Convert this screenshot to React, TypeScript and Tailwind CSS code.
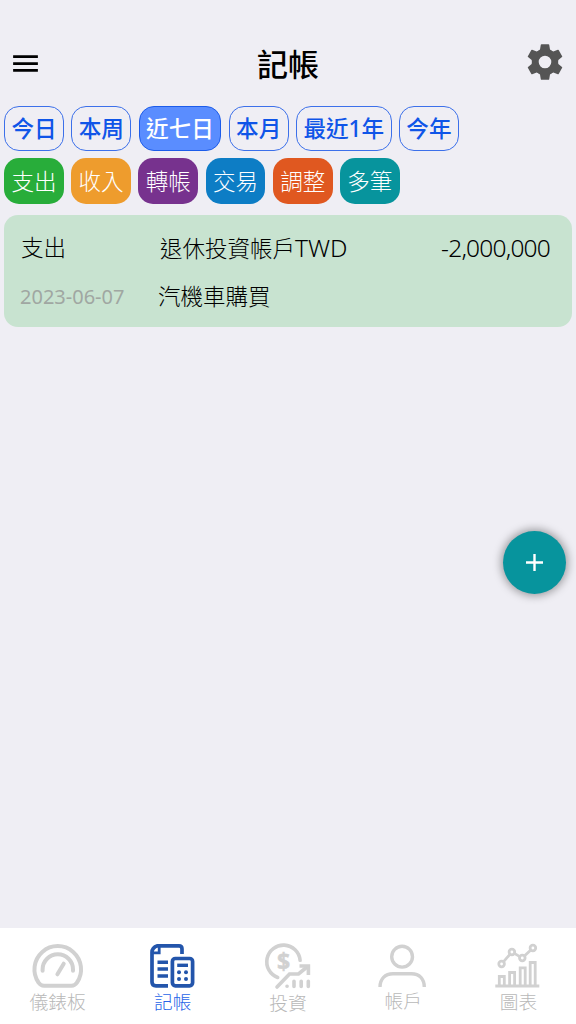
import type { ReactNode } from 'react';
import { MdMenu } from 'react-icons/md';

const RANGES = ['今日', '本周', '近七日', '本月', '最近1年', '今年'];
const ACTIVE_RANGE = '近七日';

const ACTIONS = [
  { label: '支出', color: 'bg-[#28ad3a]' },
  { label: '收入', color: 'bg-[#ee9c2d]' },
  { label: '轉帳', color: 'bg-[#77328e]' },
  { label: '交易', color: 'bg-[#0d7dc5]' },
  { label: '調整', color: 'bg-[#e05820]' },
  { label: '多筆', color: 'bg-[#07949d]' },
];

function GearIcon() {
  return (
    <svg width="36" height="36" viewBox="-18 -18 36 36" fill="currentColor">
      <circle r="9.5" fill="none" stroke="currentColor" strokeWidth="6.4" />
      {/* one tooth, repeated six times */}
      {[0, 60, 120, 180, 240, 300].map(angle => (
        <path key={angle} transform={`rotate(${angle})`} d="M-3.5-17.8H3.5Q4.1-17.8 4.2-17.2L5-12.5 7-11V-9H-7V-11L-5-12.5-4.2-17.2Q-4.1-17.8-3.5-17.8Z" />
      ))}
    </svg>
  );
}

function NavIcon({ children }: { children: ReactNode }) {
  return (
    <svg width="56" height="48" viewBox="0 0 56 48" fill="none" stroke="currentColor" className="shrink-0">
      {children}
    </svg>
  );
}

function GaugeIcon() {
  return (
    <NavIcon>
      <g strokeWidth="4" strokeLinecap="round">
        <path d="M14 43.7Q10.5 43.7 8.5 40.5A23.3 23.3 0 1 1 47 40.5Q45 43.7 41.5 43.7Z" />
        <path d="M12.6 28.7v-1.2a15.2 15.2 0 0 1 30.4 0v1.2M33.7 21.7l-6.3 10.6" />
      </g>
    </NavIcon>
  );
}

function LedgerIcon() {
  return (
    <NavIcon>
      <g strokeWidth="3.7">
        <path d="M37 12V7Q37 3.8 34 3.8H12.5Q7 5.5 7 10.5V40Q7 43.8 11 43.8H23" />
        <path d="M14.2 4V10.8H7" strokeWidth="2.8" />
        <path d="M12.5 20.3H23M12.5 27H23M12.5 34H23" strokeWidth="3.5" />
        <rect x="27.4" y="16.5" width="20.2" height="27.3" rx="3" />
        <path d="M32.2 23.3H43" strokeWidth="3.4" />
      </g>
      <g fill="currentColor" stroke="none">
        <circle cx="34" cy="30.3" r="2" />
        <circle cx="41" cy="30.3" r="2" />
        <circle cx="34" cy="37" r="2" />
        <circle cx="41" cy="37" r="2" />
      </g>
    </NavIcon>
  );
}

function InvestIcon() {
  return (
    <NavIcon>
      <g strokeWidth="3.6">
        <path d="M40.1 18.3A16.7 16.7 0 1 0 17.7 35.5" strokeLinecap="round" />
        <path d="M17 45L29.5 32H38.5L47 25" strokeLinecap="round" />
        <path d="M39.5 24H48.4V33" />
        <path d="M27 44.3h.1M34 39.2v5.3M41.2 39.2v5.3M48.3 39.2v5.3" strokeLinecap="round" />
      </g>
      <text x="23.5" y="27.8" textAnchor="middle" fill="currentColor" strokeWidth="0.5" className="font-['Noto_Sans'] text-[23px] font-bold">$</text>
    </NavIcon>
  );
}

function UserIcon() {
  return (
    <NavIcon>
      <g strokeWidth="3.4">
        <circle cx="27.1" cy="14.7" r="10.4" />
        <path d="M5 45C5 37 10 31.7 18 31.7H36.5C44.5 31.7 49.3 37 49.3 45" />
      </g>
    </NavIcon>
  );
}

function ChartIcon() {
  return (
    <NavIcon>
      <g strokeWidth="2.8">
        <path d="M5.3 44H49.3" />
        <path d="M9.3 44V34.5h5V44M19.6 44V30.5h5V44M30.2 44V25.8h5V44M40.2 44V20.5h5V44" />
        <circle cx="11.6" cy="22" r="2.8" />
        <circle cx="21.9" cy="10" r="2.8" />
        <circle cx="32.3" cy="16" r="2.8" />
        <circle cx="42.9" cy="6" r="2.8" />
        <path d="M13.4 19.9l6.7-7.8M24.3 11.4l5.6 3.2M34.4 14.1l6.4-6.1" />
      </g>
    </NavIcon>
  );
}

const TABS = [
  { label: '儀錶板', icon: <GaugeIcon />, leading: 'leading-[24px]' },
  { label: '記帳', icon: <LedgerIcon />, leading: 'leading-[24px]', active: true },
  { label: '投資', icon: <InvestIcon />, leading: 'leading-[26px]' },
  { label: '帳戶', icon: <UserIcon />, leading: 'leading-[22px]' },
  { label: '圖表', icon: <ChartIcon />, leading: 'leading-[23px]' },
];

export default function App() {
  return (
    <div className="flex flex-col h-screen w-full overflow-hidden bg-[#efeef4] text-black font-['Noto_Sans','Noto_Sans_CJK_TC',sans-serif]">
      {/* Header */}
      <header className="grid grid-cols-3 items-center h-[105.5px] pt-[21.5px] pl-[9px] pr-[13px] shrink-0">
        <button>
          <MdMenu size={33} />
        </button>
        <h1 className="text-center text-[31px] leading-[40px] pl-1 font-medium">記帳</h1>
        <button className="justify-self-end -mt-[3px] text-[#555555]">
          <GearIcon />
        </button>
      </header>

      {/* Date range chips */}
      <div className="flex gap-[7.4px] px-1 shrink-0">
        {RANGES.map(range => (
          <button
            key={range}
            className={`h-[45.5px] px-[6.4px] rounded-[15px] border text-[22.6px] leading-[43px] font-medium whitespace-nowrap ${
              range === ACTIVE_RANGE ? 'bg-[#5a8dff] border-[#1c5cea] text-white' : 'border-[#3c70ea] text-[#0f55e8]'
            }`}
          >
            {range}
          </button>
        ))}
      </div>

      {/* New record buttons */}
      <div className="flex gap-[7.4px] px-1 mt-[7px] shrink-0">
        {ACTIONS.map(({ label, color }) => (
          <button key={label} className={`h-[45.5px] px-[7.4px] rounded-[15px] text-[22.5px] leading-[47px] font-light text-white ${color}`}>
            {label}
          </button>
        ))}
      </div>

      {/* Record card */}
      <div className="mx-1 mt-[11px] h-[112px] rounded-[14px] bg-[#c8e3d0] pl-[17px] pr-[22px] pt-[9px] shrink-0">
        <div className="flex h-[49px] items-center text-[22.5px] font-light">
          <span className="w-[139px]">支出</span>
          <span>
            退休投資帳戶<span className="text-[24.5px]">TWD</span>
          </span>
          <span className="ml-auto text-[24.5px] tracking-[-0.8px]">-2,000,000</span>
        </div>
        <div className="flex h-[48px] items-center text-[22.5px] font-light">
          <span className="-ml-px w-[138px] text-[20px] font-normal text-[#a0a7a2]">2023-06-07</span>
          <span>汽機車購買</span>
        </div>
      </div>

      {/* Floating add button */}
      <button className="absolute left-[503.4px] top-[531.4px] flex size-[63px] items-center justify-center rounded-full bg-[#07949d] text-white shadow-[0_0_9px_2px_rgba(0,0,0,0.35)]">
        <svg width="17" height="17" viewBox="0 0 17 17" stroke="currentColor" strokeWidth="2.4">
          <path d="M8.5 0V17M0 8.5H17" />
        </svg>
      </button>

      {/* Tab bar */}
      <nav className="mt-auto grid grid-cols-5 h-[96.5px] bg-white pt-[14.5px] shrink-0">
        {TABS.map(({ label, icon, leading, active }) => (
          <button key={label} className={`flex flex-col items-center ${active ? 'text-[#2355ab]' : 'text-[#d1d1d1]'}`}>
            {icon}
            <span className={`text-[18.7px] font-light ${leading} ${active ? 'text-[#2864e8]' : 'text-[#b8b8b8]'}`}>{label}</span>
          </button>
        ))}
      </nav>
    </div>
  );
}
